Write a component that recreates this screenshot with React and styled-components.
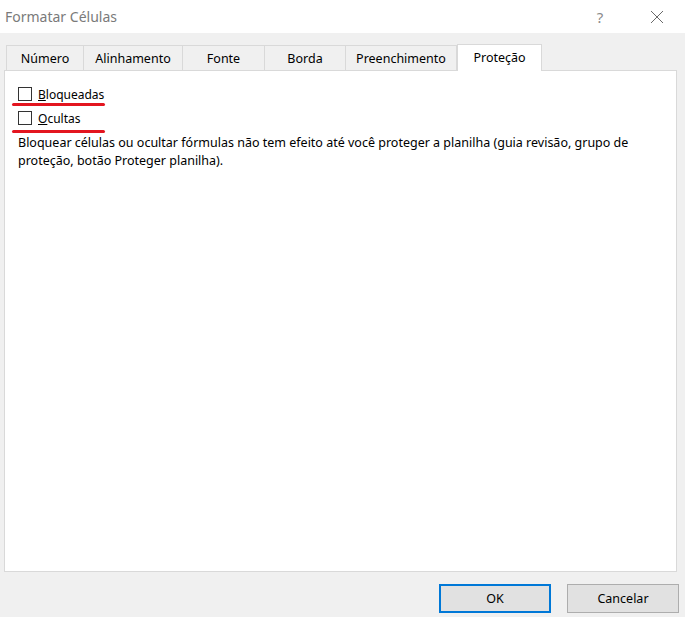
import styled, { createGlobalStyle } from "styled-components"

const Global = createGlobalStyle`
  html, body {
    margin: 0;
    padding: 0;
    background: #f0f0f0;
  }
  body {
    font-family: "Segoe UI", "Noto Sans", "Open Sans", sans-serif;
    color: #000;
  }
`

const Dialog = styled.div`
  width: 685px;
  height: 617px;
  display: flex;
  flex-direction: column;
  background: #f0f0f0;
  overflow: hidden;
`

const TitleBar = styled.div`
  height: 33px;
  background: #fff;
  display: flex;
  align-items: center;
  padding-left: 5px;
  padding-right: 5px;
`

const Title = styled.div`
  flex: 1;
  font-size: 14px;
  color: #7a7a7a;
  padding-bottom: 1px;
`

const TitleButton = styled.div`
  width: 46px;
  height: 33px;
  display: flex;
  align-items: center;
  justify-content: center;
  color: #8a8a8a;
  font-size: 15px;
  margin-right: ${p => p.gap || 0}px;
`

const Body = styled.div`
  flex: 1;
  display: flex;
  flex-direction: column;
  padding: 10px 8px 0 4px;
`

const Tabs = styled.div`
  display: flex;
  align-items: flex-end;
  height: 27px;
  padding-left: 2px;
`

const Tab = styled.div`
  width: ${p => p.w}px;
  height: ${p => (p.active ? 27 : 25)}px;
  box-sizing: border-box;
  display: flex;
  align-items: center;
  justify-content: center;
  font-size: 12.5px;
  border: 1px solid #d9d9d9;
  border-bottom: none;
  border-left: ${p => (p.first || p.active ? "1px solid #d9d9d9" : "none")};
  background: ${p => (p.active ? "#fff" : "#f0f0f0")};
  margin-bottom: ${p => (p.active ? "-1px" : "0")};
  padding-bottom: ${p => (p.active ? "2px" : "0")};
  position: relative;
  z-index: ${p => (p.active ? 1 : 0)};
`

const Panel = styled.div`
  height: 502px;
  box-sizing: border-box;
  background: #fff;
  border: 1px solid #d9d9d9;
  padding: 15px 12px 0 7px;
  display: flex;
  flex-direction: column;
`

const CheckRow = styled.div`
  height: 16px;
  display: flex;
  align-items: center;
  gap: 6px;
  padding-left: 6px;
  margin-top: ${p => p.gap || 0}px;
  font-size: 12px;
`

const Box = styled.span`
  width: 14px;
  height: 14px;
  box-sizing: border-box;
  border: 1px solid #333;
  background: #fff;
`

const Key = styled.span`
  text-decoration: underline;
`

const Mark = styled.div`
  width: 93px;
  height: 3px;
  border-radius: 2px;
  background: #e3151f;
  margin-top: ${p => p.gap || 0}px;
`

const Note = styled.p`
  margin: 1px 0 0 6px;
  font-size: 12.5px;
  line-height: 17.5px;
  width: 650px;
`

const Footer = styled.div`
  display: flex;
  justify-content: flex-end;
  gap: 16px;
  padding-top: 12px;
  margin-right: -2px;
`

const Button = styled.button`
  width: 112px;
  height: 29px;
  box-sizing: border-box;
  background: #e1e1e1;
  border: ${p => (p.primary ? "2px solid #0078d7" : "1px solid #adadad")};
  font-family: inherit;
  font-size: 12.5px;
  color: #000;
  padding: 0;
`

const tabs = [
  ["Número", 78],
  ["Alinhamento", 99],
  ["Fonte", 82],
  ["Borda", 81],
  ["Preenchimento", 111],
  ["Proteção", 85],
]

export default function App() {
  return (
    <Dialog>
      <Global />
      <TitleBar>
        <Title>Formatar Células</Title>
        <TitleButton gap={11}>?</TitleButton>
        <TitleButton>
          <svg width="14" height="14" viewBox="0 0 14 14">
            <path d="M1 1 L13 13 M13 1 L1 13" stroke="#6a6a6a" strokeWidth="1" fill="none" />
          </svg>
        </TitleButton>
      </TitleBar>
      <Body>
        <Tabs>
          {tabs.map(([label, w], i) => (
            <Tab key={label} w={w} first={i === 0} active={i === tabs.length - 1}>
              {label}
            </Tab>
          ))}
        </Tabs>
        <Panel>
          <CheckRow>
            <Box />
            <span><Key>B</Key>loqueadas</span>
          </CheckRow>
          <Mark gap={1} />
          <CheckRow gap={4}>
            <Box />
            <span><Key>O</Key>cultas</span>
          </CheckRow>
          <Mark gap={4} />
          <Note>
            Bloquear células ou ocultar fórmulas não tem efeito até você proteger a planilha (guia revisão, grupo de
            proteção, botão Proteger planilha).
          </Note>
        </Panel>
        <Footer>
          <Button primary>OK</Button>
          <Button>Cancelar</Button>
        </Footer>
      </Body>
    </Dialog>
  )
}
